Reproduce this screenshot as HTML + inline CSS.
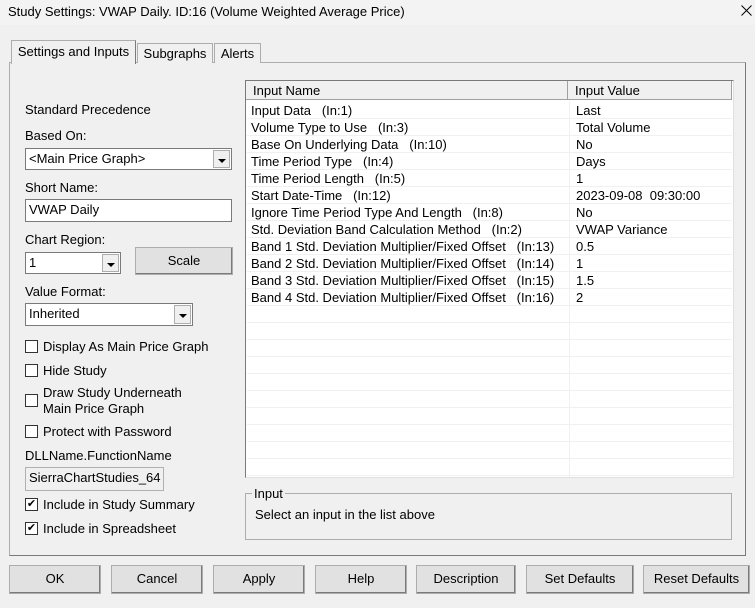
<!DOCTYPE html>
<html><head><meta charset="utf-8"><style>
*{box-sizing:border-box;margin:0;padding:0}
body{width:755px;height:608px;background:#f0f0f0;font-family:"Liberation Sans",Arial,sans-serif;font-size:13px;color:#000;position:relative;overflow:hidden}
.a{position:absolute;white-space:nowrap}
.tab{position:absolute;background:#f0f0f0;border:1px solid #adadad;border-bottom:none;text-align:center;line-height:19px}
.combo{position:absolute;background:#fff;border:1px solid #7a7a7a;padding-left:3px;line-height:20px}
.combo .dd{position:absolute;right:1px;top:1px;bottom:1px;width:17px;background:#f0f0f0;border:1px solid #adadad}
.combo .dd:after{content:"";position:absolute;left:4px;top:8px;border-left:4px solid transparent;border-right:4px solid transparent;border-top:4px solid #000}
.edit{position:absolute;background:#fff;border:1px solid #7a7a7a;padding-left:3px;line-height:20px}
.btn{position:absolute;background:#e1e1e1;border:1px solid #adadad;box-shadow:inset -1px -1px 0 #7a7a7a;text-align:center;line-height:26px}
.cb{position:absolute;width:13px;height:13px;border:1px solid #333;background:#fff}
.row{position:absolute;left:247px;width:485px;height:17px;border-bottom:1px solid #f0f0f0;line-height:18px}
.row span{position:absolute;left:4px}
.row b{font-weight:normal;position:absolute;left:329px}
</style></head><body>
<div class="a" style="left:0;top:0;width:755px;height:25px;background:#f3f3f3"></div>
<div class="a" style="left:8px;top:4px">Study Settings: VWAP Daily. ID:16 (Volume Weighted Average Price)</div>
<svg class="a" style="left:741px;top:5px" width="11" height="11"><path d="M0.5 0.5L10.5 10.5M10.5 0.5L0.5 10.5" stroke="#000" stroke-width="1"/></svg>

<div class="a" style="left:9px;top:62px;width:737px;height:494px;border:1px solid #adadad;border-right:1px solid #7a7a7a;border-bottom:1px solid #7a7a7a"></div>
<div class="tab" style="left:137px;top:43px;width:76px;height:20px">Subgraphs</div>
<div class="tab" style="left:214px;top:43px;width:47px;height:20px">Alerts</div>
<div class="tab" style="left:11px;top:40px;width:125px;height:24px;line-height:22px;border-right:1px solid #7a7a7a">Settings and Inputs</div>

<div class="a" style="left:25px;top:102px">Standard Precedence</div>
<div class="a" style="left:25px;top:128px">Based On:</div>
<div class="combo" style="left:25px;top:148px;width:207px;height:22px">&lt;Main Price Graph&gt;<div class="dd"></div></div>
<div class="a" style="left:25px;top:180px">Short Name:</div>
<div class="edit" style="left:25px;top:199px;width:207px;height:23px">VWAP Daily</div>
<div class="a" style="left:25px;top:232px">Chart Region:</div>
<div class="combo" style="left:25px;top:252px;width:96px;height:22px">1<div class="dd"></div></div>
<div class="btn" style="left:135px;top:247px;width:98px;height:28px">Scale</div>
<div class="a" style="left:25px;top:284px">Value Format:</div>
<div class="combo" style="left:25px;top:303px;width:168px;height:23px">Inherited<div class="dd"></div></div>

<div class="cb" style="left:25px;top:340px"></div><div class="a" style="left:43px;top:339px">Display As Main Price Graph</div>
<div class="cb" style="left:25px;top:364px"></div><div class="a" style="left:43px;top:363px">Hide Study</div>
<div class="cb" style="left:25px;top:394px"></div><div class="a" style="left:43px;top:385px;line-height:16px">Draw Study Underneath<br>Main Price Graph</div>
<div class="cb" style="left:25px;top:425px"></div><div class="a" style="left:43px;top:424px">Protect with Password</div>
<div class="a" style="left:25px;top:448px">DLLName.FunctionName</div>
<div class="edit" style="left:25px;top:467px;width:139px;height:24px;background:#f0f0f0;border-color:#b0b0b0;overflow:hidden">SierraChartStudies_64</div>
<div class="cb" style="left:25px;top:498px;font-size:11px;line-height:10px;text-align:center">✔</div><div class="a" style="left:43px;top:497px">Include in Study Summary</div>
<div class="cb" style="left:25px;top:522px;font-size:11px;line-height:10px;text-align:center">✔</div><div class="a" style="left:43px;top:521px">Include in Spreadsheet</div>

<div class="a" style="left:245px;top:80px;width:489px;height:398px;background:#fff;border:1px solid #7a7a7a;border-right-color:#e0e0e0;border-bottom-color:#e0e0e0"></div>
<div class="a" style="left:246px;top:81px;width:322px;height:19px;background:#f0f0f0;border-right:1px solid #a0a0a0;border-bottom:1px solid #a0a0a0;padding-left:7px;line-height:20px">Input Name</div>
<div class="a" style="left:568px;top:81px;width:164px;height:19px;background:#f0f0f0;border-right:1px solid #a0a0a0;border-bottom:1px solid #a0a0a0;padding-left:7px;line-height:20px">Input Value</div>
<div class="a" style="left:569px;top:101px;width:1px;height:376px;background:#f0f0f0"></div>
<div class="row" style="top:102px"><span>Input Data &nbsp; (In:1)</span><b>Last</b></div>
<div class="row" style="top:119px"><span>Volume Type to Use &nbsp; (In:3)</span><b>Total Volume</b></div>
<div class="row" style="top:136px"><span>Base On Underlying Data &nbsp; (In:10)</span><b>No</b></div>
<div class="row" style="top:153px"><span>Time Period Type &nbsp; (In:4)</span><b>Days</b></div>
<div class="row" style="top:170px"><span>Time Period Length &nbsp; (In:5)</span><b>1</b></div>
<div class="row" style="top:187px"><span>Start Date-Time &nbsp; (In:12)</span><b>2023-09-08 &nbsp;09:30:00</b></div>
<div class="row" style="top:204px"><span>Ignore Time Period Type And Length &nbsp; (In:8)</span><b>No</b></div>
<div class="row" style="top:221px"><span>Std. Deviation Band Calculation Method &nbsp; (In:2)</span><b>VWAP Variance</b></div>
<div class="row" style="top:238px"><span>Band 1 Std. Deviation Multiplier/Fixed Offset &nbsp; (In:13)</span><b>0.5</b></div>
<div class="row" style="top:255px"><span>Band 2 Std. Deviation Multiplier/Fixed Offset &nbsp; (In:14)</span><b>1</b></div>
<div class="row" style="top:272px"><span>Band 3 Std. Deviation Multiplier/Fixed Offset &nbsp; (In:15)</span><b>1.5</b></div>
<div class="row" style="top:289px"><span>Band 4 Std. Deviation Multiplier/Fixed Offset &nbsp; (In:16)</span><b>2</b></div>
<div class="row" style="top:306px"></div><div class="row" style="top:323px"></div><div class="row" style="top:340px"></div>
<div class="row" style="top:357px"></div><div class="row" style="top:374px"></div><div class="row" style="top:391px"></div>
<div class="row" style="top:408px"></div><div class="row" style="top:425px"></div><div class="row" style="top:442px"></div>
<div class="row" style="top:459px"></div>

<div class="a" style="left:245px;top:493px;width:487px;height:47px;border:1px solid #adadad"></div>
<div class="a" style="left:252px;top:486px;background:#f0f0f0;padding:0 2px">Input</div>
<div class="a" style="left:255px;top:507px">Select an input in the list above</div>

<div class="btn" style="left:9px;top:565px;width:92px;height:29px">OK</div>
<div class="btn" style="left:111px;top:565px;width:92px;height:29px">Cancel</div>
<div class="btn" style="left:213px;top:565px;width:92px;height:29px">Apply</div>
<div class="btn" style="left:315px;top:565px;width:92px;height:29px">Help</div>
<div class="btn" style="left:416px;top:565px;width:100px;height:29px">Description</div>
<div class="btn" style="left:526px;top:565px;width:108px;height:29px">Set Defaults</div>
<div class="btn" style="left:643px;top:565px;width:107px;height:29px">Reset Defaults</div>
</body></html>
